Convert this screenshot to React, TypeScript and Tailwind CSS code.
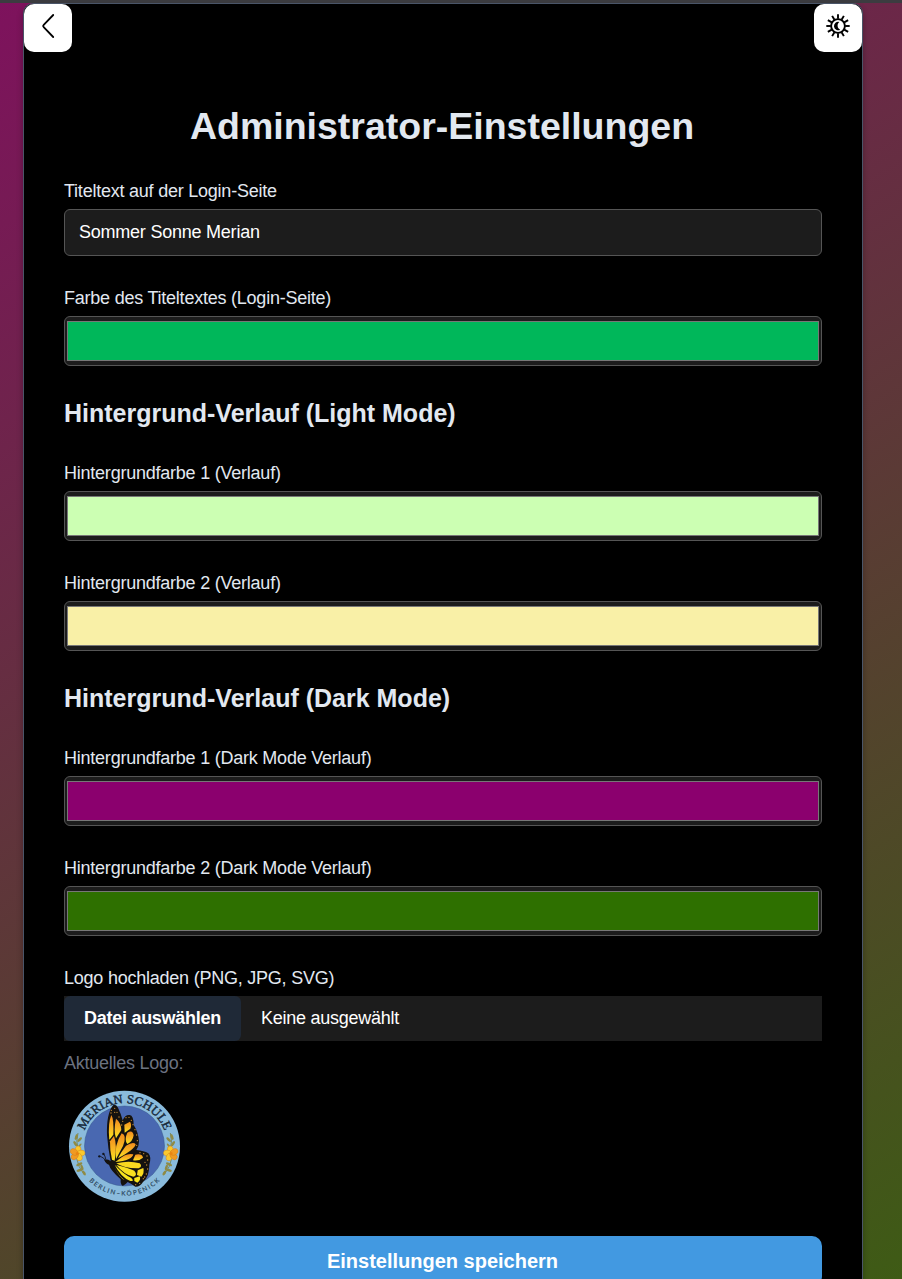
import React from "react";

const rays = [0, 30, 60, 90, 120, 150, 180, 210, 240, 270, 300, 330];

function BackIcon() {
  return (
    <svg width="24" height="28" viewBox="0 0 24 28" fill="none" stroke="#000" strokeWidth="1.8" strokeLinecap="round" strokeLinejoin="round">
      <path d="M17.2 3 7.7 12.8Q6.500 14 7.700 15.200L17.200 25" />
    </svg>
  );
}

function ThemeIcon() {
  return (
    <svg width="24" height="24" viewBox="-12 -12 24 24" fill="none" stroke="#000">
      <circle r="6.9" strokeWidth="1.9" />
      {rays.map((a) => (
        <path key={a} d="M0-7.2V-11.7" strokeWidth="1.9" transform={`rotate(${a})`} />
      ))}
      <path d="M1.400-4A4.200 4.200 0 1 0 2.200 3.700A4.500 4.500 0 0 1 1.400-4Z" fill="#000" stroke="none" />
    </svg>
  );
}

function Flower({ x, flip }: { x: number; flip?: boolean }) {
  return (
    <g transform={`translate(${x} 206) scale(${flip ? -1 : 1} 1)`}>
      <path d="M2-14Q-5-38 2-62M-2 14Q2 40 20 62" stroke="#71804f" strokeWidth="2.5" fill="none" />
      <g fill="#8f8b45">
        <ellipse cx="-3" cy="-50" rx="4" ry="9" transform="rotate(20 -3 -50)" />
        <ellipse cx="7" cy="-42" rx="4" ry="9" transform="rotate(45 7 -42)" />
        <ellipse cx="-6" cy="-30" rx="4" ry="9" transform="rotate(-35 -6 -30)" />
        <ellipse cx="7" cy="-24" rx="3" ry="8" transform="rotate(40 7 -24)" />
        <ellipse cx="6" cy="32" rx="4" ry="10" transform="rotate(65 6 32)" />
        <ellipse cx="14" cy="42" rx="4" ry="9" transform="rotate(-20 14 42)" />
        <ellipse cx="6" cy="50" rx="4" ry="9" transform="rotate(75 6 50)" />
        <ellipse cx="20" cy="58" rx="4" ry="8" transform="rotate(-35 20 58)" />
      </g>
      {[10, 82, 154, 226, 298].map((a) => (
        <ellipse key={a} cy="-11" rx="9" ry="12" fill={a > 200 ? "#f09a22" : "#fbc92c"} stroke="#c9791d" strokeWidth="1.2" transform={`rotate(${a})`} />
      ))}
      <circle r="5" fill="#e98512" />
    </g>
  );
}

function SchoolLogo() {
  return (
    <svg width="120" height="120" viewBox="12 3 360 360">
      <defs>
        <path id="arc-top" d="M65 183A128.500 128.500 0 0 1 322 183" />
        <path id="arc-bottom" d="M44.500 183A149 149 0 0 0 342.500 183" />
        <linearGradient id="wing" x1="0" y1="0" x2="0" y2="1">
          <stop offset="0" stopColor="#f28b1c" />
          <stop offset="0.5" stopColor="#f9b423" />
          <stop offset="1" stopColor="#f9e51f" />
        </linearGradient>
      </defs>
      <circle cx="193.500" cy="183.500" r="166.500" fill="#8abbdc" />
      <circle cx="193.500" cy="183" r="120" fill="#4968b1" stroke="#34548d" strokeWidth="1.500" />
      <text fontFamily="Liberation Serif, serif" fontSize="38" fill="#172a3c" stroke="#172a3c" strokeWidth="1.300" textAnchor="middle">
        <textPath href="#arc-top" startOffset="50%" textLength="310" lengthAdjust="spacing">MERIAN SCHULE</textPath>
      </text>
      <text fontFamily="Lato, sans-serif" fontSize="19" fill="#263e54" stroke="#263e54" strokeWidth="0.400" textAnchor="middle">
        <textPath href="#arc-bottom" startOffset="50%" textLength="236" lengthAdjust="spacing">BERLIN–KÖPENICK</textPath>
      </text>
      <Flower x={52} />
      <Flower x={333} flip />
      <path d="M139 232Q132 216 121 214M139 230Q136 214 131 205" stroke="#11151d" strokeWidth="2.500" fill="none" />
      <circle cx="118" cy="214" r="3.500" fill="#11151d" />
      <circle cx="130" cy="207" r="3.500" fill="#11151d" />
      <path d="M133 226Q144 220 152 229Q144 190 141 150Q139 86 159 61Q167 55 174 68Q183 86 188 106Q196 88 209 90Q221 92 221 120Q235 141 237 169Q237 185 229 195Q252 197 265 205Q275 215 268 239Q268 276 249 291Q240 306 226 305Q212 294 203 291Q190 304 187 302Q181 298 182 283Q150 254 147 239Q141 240 133 226Z" fill="#15120f" />
      <g fill="url(#wing)">
        <path d="M154 90Q162 102 160 149L148 164Q143 116 154 90Z" />
        <path d="M168 101Q183 113 184 135L168 160Q160 138 168 101Z" />
        <path d="M150 169L162 153Q172 180 164 227L156 224Q149 194 150 169Z" />
        <path d="M185 145Q202 151 189 183L168 222Q162 180 185 145Z" />
        <path d="M193 119L210 110Q216 119 211 131L194 143Z" />
        <path d="M202 143Q218 133 221 151Q218 170 202 177Q192 164 202 143Z" />
        <path d="M198 182Q220 168 227 178Q225 193 174 220Q182 202 198 182Z" />
        <path d="M174 225Q199 202 220 208Q216 227 166 231Z" />
        <path d="M226 209Q246 205 249 218Q237 229 219 226Z" />
        <path d="M169 235Q207 225 239 235Q249 244 236 250Q193 251 169 235Z" fill="#f9d820" />
        <path d="M169 240Q208 250 223 257Q234 271 220 275Q193 270 169 240Z" fill="#f9e020" />
        <path d="M164 239Q191 268 213 278Q225 289 211 288Q182 276 164 239Z" fill="#f9e51f" />
        <path d="M162 244Q178 276 194 285Q181 283 162 244Z" fill="#f9e51f" />
        <path d="M233 256L250 249Q254 264 244 275L231 270Z" fill="#f9dc20" />
        <path d="M223 279L239 274Q244 285 232 293L223 288Z" fill="#f9e51f" />
      </g>
      <g fill="#c98f36">
        {[[154, 76], [164, 70], [171, 82], [177, 96], [153, 84], [198, 98], [207, 97], [214, 106], [219, 119], [225, 134], [230, 150], [232, 167], [230, 181], [240, 203], [251, 206], [261, 213], [263, 225], [260, 240], [263, 252], [259, 267], [250, 281], [239, 295], [227, 299], [188, 109], [185, 120], [164, 82], [255, 232], [254, 276]].map(([x, y]) => (
          <circle key={`${x}-${y}`} cx={x} cy={y} r="2" />
        ))}
      </g>
    </svg>
  );
}

function Label({ children }: { children: React.ReactNode }) {
  return <div className="h-5 whitespace-nowrap text-[18px] leading-5 tracking-[-0.23px] text-[#e2e8f0]">{children}</div>;
}

function ColorField({ label, swatch }: { label: string; swatch: string }) {
  return (
    <div className="flex flex-col gap-2">
      <Label>{label}</Label>
      <div className="h-[50px] rounded-[6px] border border-[#555] bg-[#1c1c1c] px-[2px] py-1">
        <div className={`h-10 border border-[#777] ${swatch}`} />
      </div>
    </div>
  );
}

function SectionTitle({ children }: { children: React.ReactNode }) {
  return <h2 className="h-[33px] whitespace-nowrap text-[25px] font-bold leading-[31px] text-[#e2e8f0]">{children}</h2>;
}

export default function App() {
  return (
    <div className="flex h-screen w-full flex-col overflow-hidden bg-[linear-gradient(150deg,#7e125d_0%,#3e5b15_100%)] font-['Liberation_Sans',Arial,sans-serif]">
      <div className="h-[3px] shrink-0 bg-[#3c3c40]" />
      <main className="ml-[23px] h-[1400px] w-[840px] shrink-0 rounded-t-[10px] border border-[#4a5568] bg-black shadow-[0_4px_6px_rgba(0,0,0,0.3)]">
        <div className="flex h-12 justify-between">
          <button className="flex h-12 w-12 justify-center rounded-[10px] bg-white pt-2">
            <BackIcon />
          </button>
          <button className="flex h-12 w-12 justify-center rounded-[10px] bg-white pt-[10px]">
            <ThemeIcon />
          </button>
        </div>
        <div className="flex flex-col gap-8 px-10 pt-[52px]">
          <h1 className="h-[45px] whitespace-nowrap pr-[2px] text-center text-[37.5px] font-bold leading-[45px] text-[#e2e8f0]">Administrator-Einstellungen</h1>
          <div className="flex flex-col gap-2">
            <Label>Titeltext auf der Login-Seite</Label>
            <div className="h-[47px] rounded-[6px] border border-[#555] bg-[#1c1c1c] px-[14px] text-[18px] leading-[44px] tracking-[-0.23px] text-white">Sommer Sonne Merian</div>
          </div>
          <ColorField label="Farbe des Titeltextes (Login-Seite)" swatch="bg-[#00b75a]" />
          <SectionTitle>Hintergrund-Verlauf (Light Mode)</SectionTitle>
          <ColorField label="Hintergrundfarbe 1 (Verlauf)" swatch="bg-[#ccffb3]" />
          <ColorField label="Hintergrundfarbe 2 (Verlauf)" swatch="bg-[#f9f0a7]" />
          <SectionTitle>Hintergrund-Verlauf (Dark Mode)</SectionTitle>
          <ColorField label="Hintergrundfarbe 1 (Dark Mode Verlauf)" swatch="bg-[#8b006e]" />
          <ColorField label="Hintergrundfarbe 2 (Dark Mode Verlauf)" swatch="bg-[#2e7000]" />
          <div className="flex flex-col">
            <Label>Logo hochladen (PNG, JPG, SVG)</Label>
            <div className="mt-2 flex h-[45px] bg-[#1c1c1c] text-[18px] leading-[44px] text-white">
              <button className="h-[45px] w-[177px] whitespace-nowrap rounded-[6px] bg-[#1f2937] text-[18px] font-bold leading-[45px] tracking-[-0.26px]">Datei auswählen</button>
              <span className="ml-5 tracking-[-0.25px]">Keine ausgewählt</span>
            </div>
            <div className="mt-3 h-5 text-[18px] leading-5 tracking-[-0.25px] text-[#6b7280]">Aktuelles Logo:</div>
            <div className="mt-[13px] h-[120px]">
              <SchoolLogo />
            </div>
          </div>
          <button className="-mt-[2px] h-[50px] rounded-[10px] bg-[#4299e1] pr-px text-[20px] font-bold text-white">Einstellungen speichern</button>
        </div>
      </main>
    </div>
  );
}
